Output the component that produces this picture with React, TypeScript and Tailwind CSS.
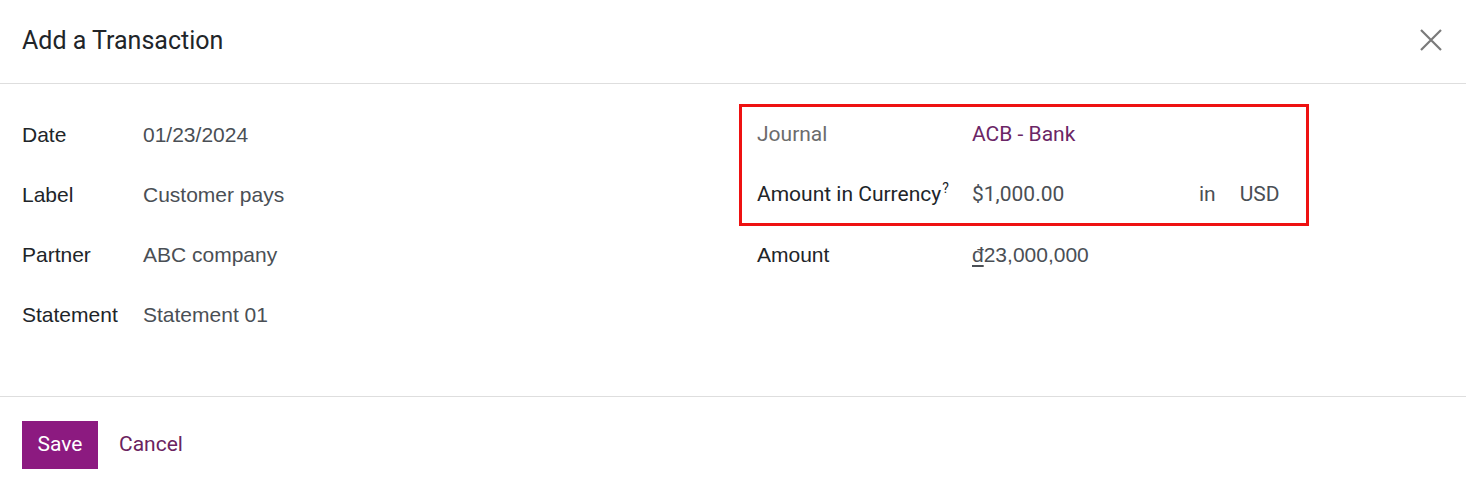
import { FC } from "react";

const roboto = "font-['Roboto',sans-serif]";
const arial = "font-['Liberation_Sans',Arial,sans-serif]";

const leftRows = [
  { label: "Date", value: "01/23/2024" },
  { label: "Label", value: "Customer pays" },
  { label: "Partner", value: "ABC company" },
  { label: "Statement", value: "Statement 01" },
];

const CloseIcon: FC = () => (
  <svg width="24" height="24" viewBox="0 0 24 24" fill="none" stroke="#7a7a7a" strokeWidth="2.2">
    <path d="M2 2 L22 22 M22 2 L2 22" />
  </svg>
);

const App = () => {
  return (
    <div className="w-[1466px] h-[489px] bg-white flex flex-col">
      {/* header */}
      <div className="h-[84px] shrink-0 flex items-center justify-between pl-[22px] pr-[23px] border-b border-[#dedede]">
        <h1 className={`${roboto} text-[25px] text-[#212529] leading-none -mt-[3px]`}>Add a Transaction</h1>
        <button className="-mt-[3px]">
          <CloseIcon />
        </button>
      </div>

      {/* body */}
      <div className="h-[313px] shrink-0 flex pl-[22px] pt-[21px] border-b border-[#dedede]">
        <div className="w-[718px] flex flex-col">
          {leftRows.map((row) => (
            <div key={row.label} className={`${arial} h-[60px] flex items-center text-[21px]`}>
              <div className="w-[121px] text-[#212529]">{row.label}</div>
              <div className="text-[#4a4f55]">{row.value}</div>
            </div>
          ))}
        </div>

        <div className="w-[568px] flex flex-col">
          <div className="outline-[3px] outline-solid outline-[#ee1111] -outline-offset-[2px]">
            <div className={`${roboto} h-[60px] flex items-center pl-[17px] text-[21px]`}>
              <div className="w-[215px] text-[#6c6c6c]">Journal</div>
              <div className="text-[#6b2666]">ACB - Bank</div>
            </div>
            <div className={`${roboto} h-[60px] flex items-center pl-[17px] text-[21px]`}>
              <div className="w-[215px] text-[#212529] flex items-start">
                Amount in Currency
                <span className="text-[14px] leading-none ml-[1px] mt-[2px]">?</span>
              </div>
              <div className="w-[227px] text-[#4a4f55]">$1,000.00</div>
              <div className="text-[#4a4f55]">in</div>
              <div className="ml-[24px] text-[#4a4f55]">USD</div>
            </div>
          </div>
          <div className={`${arial} h-[60px] flex items-center pl-[17px] text-[21px]`}>
            <div className="w-[215px] text-[#212529]">Amount</div>
            <div className="text-[#4a4f55]">
              <span className="underline underline-offset-[3px] decoration-[1.5px]">đ</span>23,000,000
            </div>
          </div>
        </div>
      </div>

      {/* footer */}
      <div className="flex items-start gap-[21px] pl-[22px] pt-[24px]">
        <button className={`${roboto} h-[48px] w-[76px] bg-[#8c1a80] text-white text-[21px]`}>Save</button>
        <button className={`${roboto} h-[48px] text-[#6b2360] text-[21px]`}>Cancel</button>
      </div>
    </div>
  );
};

export default App;
